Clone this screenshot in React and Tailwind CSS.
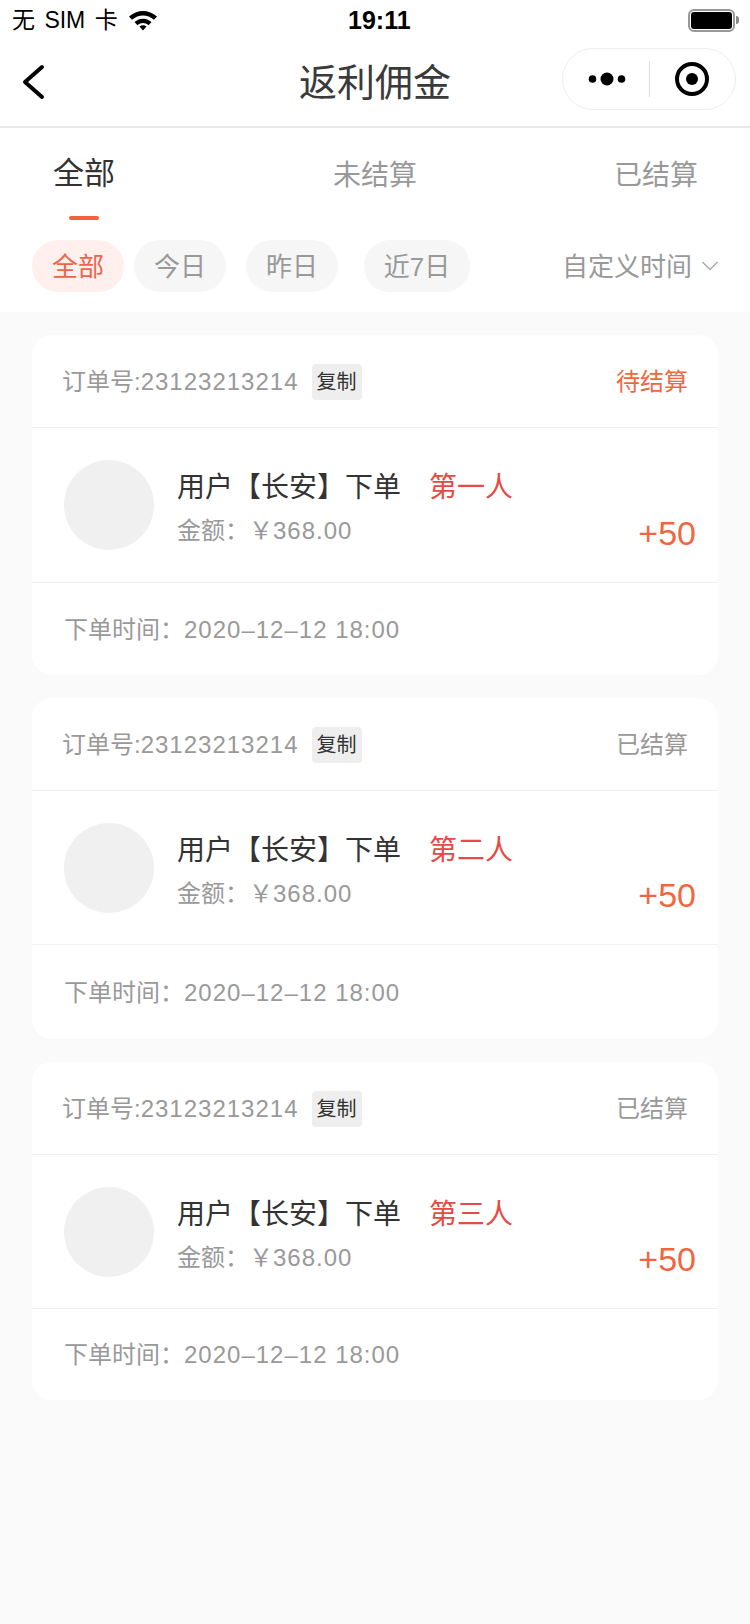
const orders = [
  { status: "待结算", statusColor: "text-[#f0673f]", rank: "第一人", h: "h-[340px]", mid: "h-[155px]" },
  { status: "已结算", statusColor: "text-[#999999]", rank: "第二人", h: "h-[341px]", mid: "h-[154px]" },
  { status: "已结算", statusColor: "text-[#999999]", rank: "第三人", h: "h-[338px]", mid: "h-[154px]" },
];

const pills = [
  { label: "全部", cls: "w-[92px] bg-[#fff0ee] text-[#f0634a]" },
  { label: "今日", cls: "w-[92px] ml-[10px] bg-[#f6f6f6] text-[#999999]" },
  { label: "昨日", cls: "w-[92px] ml-[20px] bg-[#f6f6f6] text-[#999999]" },
  { label: "近7日", cls: "w-[106px] ml-[26px] bg-[#f6f6f6] text-[#999999]" },
];

function StatusBar() {
  return (
    <div className="relative flex h-10 items-center justify-between pl-3 pr-[11px] text-black">
      <div className="flex w-[146px] items-center justify-between">
        <span className="text-[23px] leading-none [word-spacing:3px]">无 SIM 卡</span>
        <svg width="30" height="22" viewBox="0 0 30 22">
          <path d="M1 7.500C9 0 21 0 29 7.500l-3 3.200C19.500 5 10.500 5 4 10.700z" fill="#000" />
          <path d="M6.500 13C11.500 8.500 18.500 8.500 23.500 13l-3 3.200c-3.300-2.900-7.700-2.900-11 0z" fill="#000" />
          <path d="M11.500 17.500c2-1.700 5-1.700 7 0L15 21.500z" fill="#000" />
        </svg>
      </div>
      <span className="absolute left-[348px] text-[25px] font-bold leading-none">19:11</span>
      <div className="flex items-center">
        <div className="flex h-[23px] w-[47px] items-center rounded-[6px] border-2 border-[#999999] p-px">
          <div className="h-full w-full rounded-[3px] bg-black" />
        </div>
        <div className="ml-px h-[8px] w-[3px] rounded-r-sm bg-[#888888]" />
      </div>
    </div>
  );
}

function NavBar() {
  return (
    <div className="relative flex h-[88px] items-center justify-center border-b-2 border-[#e8e8e8]">
      <svg width="26" height="38" viewBox="0 0 26 38" className="absolute left-[20px] top-[24px]">
        <path d="M22 3 5 18l17 15" fill="none" stroke="#000" strokeWidth="4" strokeLinecap="round" strokeLinejoin="round" />
      </svg>
      <span className="text-[38px] leading-none text-[#3a3a3a]">返利佣金</span>
      <div className="absolute left-[562px] top-[8px] flex h-[62px] w-[174px] items-center rounded-full border border-[#eeeeee]">
        <svg width="40" height="14" viewBox="0 0 40 14" className="ml-[25px]">
          <circle cx="4.500" cy="7" r="3.800" fill="#000" />
          <circle cx="19" cy="7" r="6.500" fill="#000" />
          <circle cx="33.500" cy="7" r="3.800" fill="#000" />
        </svg>
        <div className="ml-[21px] h-[36px] w-px bg-[#dddddd]" />
        <svg width="36" height="36" viewBox="0 0 36 36" className="ml-[24px]">
          <circle cx="18" cy="18" r="15" fill="none" stroke="#000" strokeWidth="4" />
          <circle cx="18" cy="18" r="6" fill="#000" />
        </svg>
      </div>
    </div>
  );
}

function Tabs() {
  return (
    <div className="relative h-[97px]">
      <div className="flex items-start pt-[28px]">
        <div className="ml-[53px] flex w-[62px] flex-col items-center">
          <span className="whitespace-nowrap text-[31px] leading-[36px] text-[#333333]">全部</span>
          <div className="mt-[24px] h-1 w-[30px] rounded-full bg-[#f0633c]" />
        </div>
        <span className="ml-[218px] mt-[4px] text-[28px] leading-[32px] text-[#999999]">未结算</span>
        <span className="ml-[197px] mt-[4px] text-[28px] leading-[32px] text-[#999999]">已结算</span>
      </div>
    </div>
  );
}

function Filters() {
  return (
    <div className="flex h-[87px] items-start pl-[32px] pt-[15px]">
      {pills.map((p) => (
        <div key={p.label} className={`flex h-[52px] items-center justify-center rounded-full text-[26px] ${p.cls}`}>
          <span className="relative top-px">{p.label}</span>
        </div>
      ))}
      <div className="ml-[92px] flex h-[52px] items-center text-[26px] text-[#999999]">
        <span className="relative top-px">自定义时间</span>
        <svg width="18" height="12" viewBox="0 0 18 12" className="ml-[9px]">
          <path d="M1.500 2 9 9.500 16.500 2" fill="none" stroke="#aaaaaa" strokeWidth="1.500" />
        </svg>
      </div>
    </div>
  );
}

function OrderCard({ order }) {
  return (
    <div className={`flex flex-col rounded-[20px] bg-white ${order.h}`}>
      <div className="flex h-[93px] shrink-0 items-center justify-between border-b border-[#f0f0f0] px-[30px] pt-[2px]">
        <div className="flex items-center">
          <span className="text-[24px] text-[#999999]">
            订单号:<span className="tracking-[1px]">23123213214</span>
          </span>
          <span className="ml-[13px] flex h-[36px] w-[50px] items-center justify-center rounded-[4px] bg-[#eeeeee] text-[20px] text-[#333333]">
            复制
          </span>
        </div>
        <span className={`text-[24px] ${order.statusColor}`}>{order.status}</span>
      </div>
      <div className={`relative flex shrink-0 items-center border-b border-[#f0f0f0] pl-[32px] ${order.mid}`}>
        <div className="h-[90px] w-[90px] rounded-full bg-[#f0f0f0]" />
        <div className="ml-[23px] pt-[7px]">
          <div className="flex text-[28px] leading-[36px]">
            <span className="text-[#333333]">用户【长安】下单</span>
            <span className="ml-[28px] text-[#e64a44]">{order.rank}</span>
          </div>
          <div className="mt-[9px] text-[24px] leading-[32px] text-[#999999]">
            金额&#xFF1A;&#xFFE5;<span className="tracking-[1px]">368.00</span>
          </div>
        </div>
        <span className="absolute bottom-[32px] right-[22px] text-[34px] leading-none text-[#f0673f]">+50</span>
      </div>
      <div className="flex flex-1 items-center pl-[32px] pt-[1px] text-[24px] text-[#999999]">
        下单时间&#xFF1A;<span className="tracking-[1px]">2020–12–12 18:00</span>
      </div>
    </div>
  );
}

export default function App() {
  return (
    <div
      className="flex h-[1624px] w-[750px] flex-col overflow-hidden bg-[#fafafa]"
      style={{ fontFamily: '"Liberation Sans", "Noto Sans CJK SC", sans-serif' }}
    >
      <div className="bg-white">
        <StatusBar />
        <NavBar />
        <Tabs />
        <Filters />
      </div>
      <div className="flex flex-col gap-[23px] px-[32px] pt-[23px]">
        {orders.map((o) => (
          <OrderCard key={o.rank} order={o} />
        ))}
      </div>
    </div>
  );
}
